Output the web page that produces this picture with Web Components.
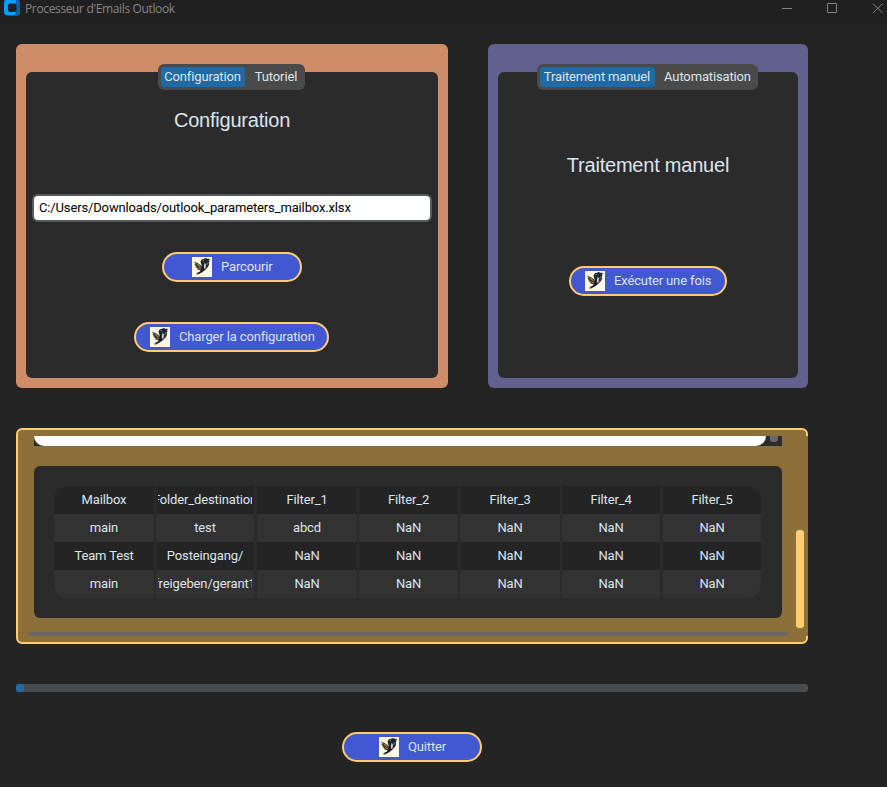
<!DOCTYPE html>
<html lang="fr">
<head>
<meta charset="utf-8">
<title>Processeur d'Emails Outlook</title>
<style>
html,body{margin:0;height:100%;background:#242424}
body{font:13px/16px Roboto,"Liberation Sans",sans-serif;letter-spacing:-.14px;color:#dce4ee;overflow:hidden}
</style>
</head>
<body>
<mail-app></mail-app>
<script>
function define(name, html) {
  const t = document.createElement('template');
  t.innerHTML = html;
  customElements.define(name, class extends HTMLElement {
    constructor() {
      super();
      this.attachShadow({mode: 'open'}).appendChild(t.content.cloneNode(true));
    }
  });
}

define('title-bar', `
<style>
:host{display:flex;height:24px;background:#202020;color:#858585;font:12px/18px "Open Sans","Noto Sans",sans-serif;box-sizing:border-box}
.logo{width:16px;height:16px;margin:0 5px 0 4px;flex:none}
.name{flex:1;letter-spacing:-.36px}
.win{width:106px;height:18px;flex:none}
</style>
<svg class="logo" viewBox="0 0 16 16"><rect width="16" height="16" y="-.5" rx="4" fill="#06a0ff"/><path d="M12-.5a4 4 0 0 1 4 4v8a4 4 0 0 1-4 4h-1l1-4V4z" fill="#0563b5"/><rect x="4" y="3.5" width="8.500" height="8.500" rx="2" fill="#202020"/></svg>
<span class="name"><slot></slot></span>
<svg class="win" viewBox="0 0 106 18" fill="none" stroke="#858585"><path d="M1 8.5h10"/><rect x="46.500" y="3.500" width="9" height="9" rx=".5"/><path d="M92 3.500l9.500 9.500M101.500 3.500L92 13"/></svg>`);

define('bird-icon', `
<style>:host{display:block;width:20px;height:20px;flex:none}svg{display:block}</style>
<svg width="20" height="20" viewBox="0 0 20 20"><rect width="20" height="20" fill="#fff8e6"/>
<path d="M1.800 4.500L6 6.300l3.500 2.500L11.500 13.500l-3.500-.3L4.500 12l1.500-.5L3 9.800l1.600-.4L2.300 7.500l1.400-.4z" fill="#33302f"/>
<path d="M3.500 5.900l3.500 1.900 2.200 2.600-2.400-1z" fill="#b9823c"/>
<path d="M5.800 10.300l2.700.9 1 1-2.200-.4z" fill="#c9924a"/>
<path d="M8.500 4.500L9.800 2.300 12 1.800 13.500 1l2 .8 3.300.3-2.500 1.200 1.500.4L16.500 6l.8.700L16 10l-3 3-2 1.500-2-2 1-3-1-3z" fill="#1b2532"/>
<path d="M12.800 5.500l1 2.300-.3 2.700-1.200 1.400-.3-3z" fill="#f6eedf"/>
<path d="M10.300 3.700l1.700-1-.7 1.600z" fill="#ded3bf"/>
<path d="M15 5l.8 1-.5 2.500-.7-1.300z" fill="#5d8193"/>
<path d="M13 11.500l2.200-1.700-1 2.400-1.200.6z" fill="#b4553f"/>
<path d="M9 12.300l3.500.6-2.300 2.400L6 17.500l-2 .1 2.500-1.300-3 .3 4.500-2z" fill="#181d26"/>
<path d="M6 18.500h8l-3 .7H8z" fill="#f5dca9"/></svg>`);

define('pill-button', `
<style>
:host{display:flex;box-sizing:border-box;width:var(--w);height:30px;border:2px solid #ffcc70;border-radius:15px;background:#4158d0;align-items:center;gap:9px;padding-left:var(--pl);white-space:nowrap}
</style>
<bird-icon></bird-icon><span><slot></slot></span>`);

define('tab-strip', `
<style>
:host{display:flex;box-sizing:border-box;width:var(--w);height:26px;padding:3px;background:#4a4a4a;border-radius:6px;line-height:19px;text-align:center;white-space:nowrap}
::slotted(*){flex:1;padding-left:6px}
::slotted(.on){flex:0 0 var(--on)!important;padding:0;height:20px;background:#1f6aa5;border-radius:3px}
</style><slot></slot>`);

define('tab-card', `
<style>
:host{display:flex;box-sizing:border-box;height:344px;width:var(--cw);padding:28px 10px 10px;background:var(--bg);border-radius:6px}
.in{flex:1;background:#2b2b2b;border-radius:6px;display:flex;flex-direction:column;align-items:center}
slot[name=tabs]{display:block;margin:-8px 2px 0 0}
</style>
<div class="in"><slot name="tabs"></slot><slot></slot></div>`);

define('path-entry', `
<style>
:host{display:block;box-sizing:border-box;width:400px;height:28px;border:2px solid #565b5e;border-radius:6px;background:#fff;color:#000;padding-left:5px;line-height:24px;white-space:nowrap}
</style><slot></slot>`);

define('card-title', `
<style>:host{display:block;font:20px/24px "Liberation Sans",Arial,sans-serif;white-space:nowrap;letter-spacing:-.22px}</style><slot></slot>`);

customElements.define('data-table', class extends HTMLElement {
  constructor() {
    super();
    const rows = [
      ['Mailbox','Folder_destination','Filter_1','Filter_2','Filter_3','Filter_4','Filter_5'],
      ['main','test','abcd','NaN','NaN','NaN','NaN'],
      ['Team Test','Posteingang/','NaN','NaN','NaN','NaN','NaN'],
      ['main','freigeben/gerant1','NaN','NaN','NaN','NaN','NaN']
    ];
    this.attachShadow({mode: 'open'}).innerHTML = `
<style>
:host{display:block;width:707px;border-radius:14px;overflow:hidden}
.r{display:grid;grid-template-columns:102px 101px 102px 101px 102px 101px 98px;height:28px}
.r>div{display:flex;line-height:27px;margin-right:2px;padding:0 2px;background:#242424}
.r>div:nth-child(2),.r>div:nth-child(6){margin-right:3px}
.r>div:last-child{margin-right:0}
.r.alt>div{background:#323232}
.r>div>span{flex:1;min-width:0;display:flex;justify-content:center;overflow:hidden;white-space:nowrap}
</style>` + rows.map((r, i) => `<div class="r${i % 2 ? ' alt' : ''}">${r.map(c => `<div><span>${c}</span></div>`).join('')}</div>`).join('');
  }
});

define('result-frame', `
<style>
:host{display:block;position:relative;box-sizing:border-box;width:792px;height:216px;border:2px solid #ffcc70;border-radius:6px;background:#8d6f3a;padding:6px 16px 0}
.top{display:flex;width:748px;height:10px;background:#2b2b2b;overflow:hidden}
.box{width:732px;background:#fff;border-radius:0 0 10px 10px}
.thumb{width:8px;height:6px;background:#696969;border-radius:0 0 3px 3px;margin-left:4px}
.panel{box-sizing:border-box;width:748px;height:152px;margin-top:20px;padding:20px;background:#2b2b2b;border-radius:6px}
.hs{height:4px;width:760px;margin:14px 0 0 -6px;background:#696969;border-radius:4px 4px 0 0}
.edge{position:absolute;right:-2px;top:6px;width:2px;height:200px;background:#8d6f3a}
.vs{position:absolute;right:2px;top:100px;width:8px;height:98px;border-radius:3px;background:#ffcc70}
</style>
<div class="top"><div class="box"></div><div class="thumb"></div></div>
<div class="panel"><data-table></data-table></div>
<div class="hs"></div><div class="edge"></div><div class="vs"></div>`);

define('progress-line', `
<style>:host{display:block;height:8px;width:792px;border-radius:3px;background:#4a4d50}div{width:8px;height:8px;border-radius:3px;background:#1f6aa5}</style><div></div>`);

define('mail-app', `
<style>
:host{display:block;height:787px;background:#242424}
main{display:flex;flex-direction:column;gap:40px;width:792px;padding:20px 0 0 16px}
.cards{display:flex;gap:40px}
</style>
<title-bar>Processeur d'Emails Outlook</title-bar>
<main>
<div class="cards">
<tab-card style="--cw:432px;--bg:#cf8c68">
<tab-strip slot="tabs" style="--w:147px;--on:84px"><span class="on">Configuration</span><span>Tutoriel</span></tab-strip>
<card-title style="margin-top:18px">Configuration</card-title>
<path-entry style="margin-top:62px">C:/Users/Downloads/outlook_parameters_mailbox.xlsx</path-entry>
<pill-button style="--w:140px;--pl:28px;margin-top:30px">Parcourir</pill-button>
<pill-button style="--w:195px;--pl:14px;margin-top:40px;margin-right:1px">Charger la configuration</pill-button>
</tab-card>
<tab-card style="--cw:320px;--bg:#62608f">
<tab-strip slot="tabs" style="--w:221px;--on:115px"><span class="on">Traitement manuel</span><span>Automatisation</span></tab-strip>
<card-title style="margin-top:63px">Traitement manuel</card-title>
<pill-button style="--w:158px;--pl:14px;margin-top:89px">Exécuter une fois</pill-button>
</tab-card>
</div>
<result-frame></result-frame>
<progress-line></progress-line>
<pill-button style="--w:140px;--pl:35px;margin-left:326px">Quitter</pill-button>
</main>`);
</script>
</body>
</html>
